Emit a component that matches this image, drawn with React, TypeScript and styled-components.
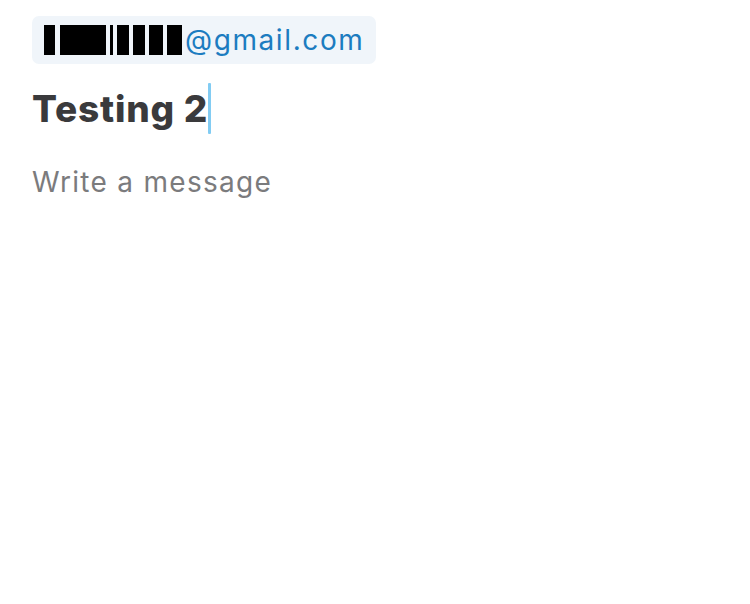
import React, { FunctionComponent } from 'react'
import styled, { createGlobalStyle } from 'styled-components'

const GlobalStyle = createGlobalStyle`
  html, body {
    margin: 0;
    padding: 0;
    background: #ffffff;
    font-family: Inter, "Noto Sans", sans-serif;
  }
`

const Page = styled.main`
  display: flex;
  flex-direction: column;
  align-items: flex-start;
  padding: 16px 32px;
  width: 750px;
  height: 604px;
  box-sizing: border-box;
`

const RecipientChip = styled.div`
  display: flex;
  align-items: center;
  height: 48px;
  padding: 0 12px;
  border-radius: 7px;
  background-color: #f0f5fa;
  color: #1c7cc0;
  font-size: 28px;
  letter-spacing: 1.6px;
`

const Redacted = styled.span<{ $width: number; $gap?: number }>`
  display: inline-block;
  width: ${({ $width }) => $width}px;
  height: 30px;
  margin-right: ${({ $gap }) => $gap ?? 4}px;
  background-color: #000000;
`

const Subject = styled.div`
  display: flex;
  align-items: center;
  margin-top: 19px;
  font-size: 37px;
  font-weight: 800;
  color: #3a3a3c;
  letter-spacing: 0.8px;
`

const Caret = styled.span`
  display: inline-block;
  width: 3px;
  height: 51px;
  background-color: #82ccf3;
  border-radius: 1px;
`

const Placeholder = styled.div`
  margin-top: 31px;
  font-size: 28px;
  color: #7b7b7d;
  letter-spacing: 1.3px;
`

const redactions = [
  { width: 11, gap: 5 },
  { width: 46, gap: 4 },
  { width: 3, gap: 4 },
  { width: 12, gap: 4 },
  { width: 12, gap: 4 },
  { width: 14, gap: 4 },
  { width: 15, gap: 3 },
]

const App: FunctionComponent = () => (
  <>
    <GlobalStyle />
    <Page>
      <RecipientChip>
        {redactions.map((r, i) => (
          <Redacted key={i} $width={r.width} $gap={r.gap} />
        ))}
        <span>@gmail.com</span>
      </RecipientChip>
      <Subject>
        Testing 2
        <Caret />
      </Subject>
      <Placeholder>Write a message</Placeholder>
    </Page>
  </>
)

export default App
